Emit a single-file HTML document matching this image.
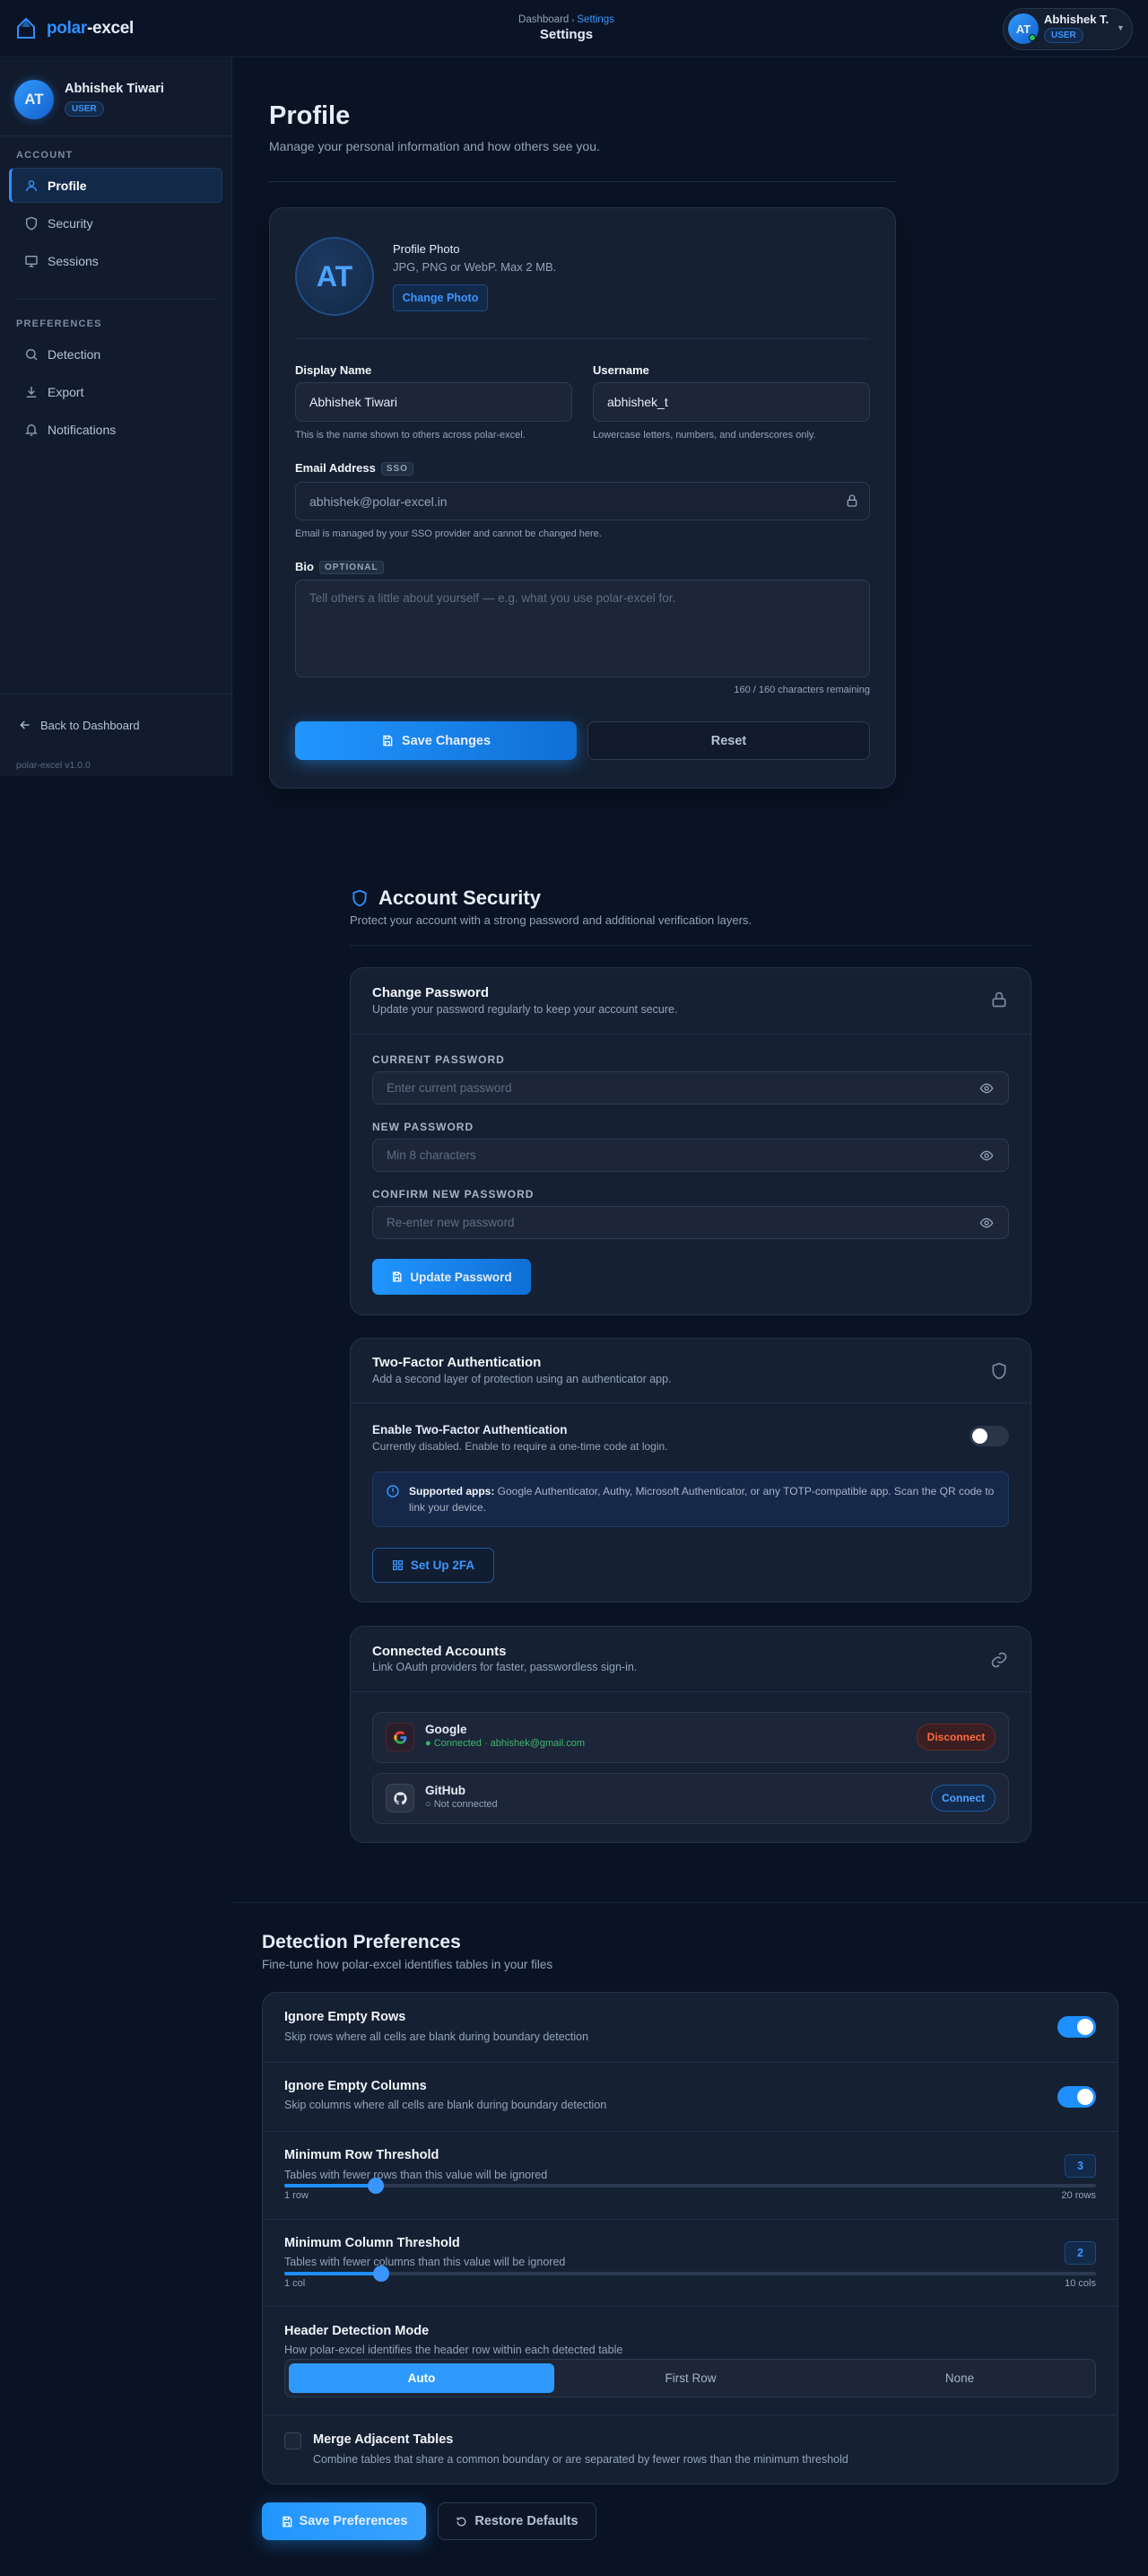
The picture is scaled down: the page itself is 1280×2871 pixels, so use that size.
<!DOCTYPE html>
<html><head><meta charset="utf-8"><style>
*{box-sizing:border-box;margin:0;padding:0}
body{width:1280px;height:2871px;background:#0a1324;font-family:"Liberation Sans",sans-serif;color:#e6edf7;position:relative;overflow:hidden}
.a{position:absolute}
.muted{color:#94a3b8}
.card{position:absolute;background:#152033;border:1px solid #24334a;border-radius:16px}
.inp{position:absolute;background:#1c2638;border:1px solid #2d3b52;border-radius:8px;font-size:14px;color:#e6edf7;padding-left:15px;display:flex;align-items:center}
.lbl{position:absolute;font-size:13px;font-weight:bold;color:#f1f5f9}
.hint{position:absolute;font-size:11px;color:#94a3b8}
.tag{display:inline-block;font-size:10px;letter-spacing:1px;color:#94a3b8;background:#222e42;border:1px solid #334158;border-radius:4px;padding:1px 5px;margin-left:6px;vertical-align:1px;font-weight:bold}
.nav{position:absolute;left:10px;width:238px;height:39px;display:flex;align-items:center;padding-left:17px;font-size:14px;color:#b6c2d3}
.nav svg{margin-right:10px}
.sec{position:absolute;left:18px;font-size:11px;letter-spacing:1.2px;color:#7d8aa0;font-weight:bold}
.h3{position:absolute;font-size:15px;font-weight:bold;color:#f1f5f9}
.sub{position:absolute;font-size:12.5px;color:#94a3b8}
.ulbl{position:absolute;font-size:12px;font-weight:bold;letter-spacing:1px;color:#a8b4c6}
.line{position:absolute;height:1px;background:#223048}
.tog{position:absolute;width:43px;height:24px;border-radius:12px;background:#1e8fff}
.tog::after{content:"";position:absolute;right:3px;top:3px;width:18px;height:18px;border-radius:50%;background:#fff}
</style></head><body>

<!-- header -->
<div class="a" style="left:0;top:0;width:1280px;height:64px;background:#0b1426;border-bottom:1px solid #17263d"></div>
<svg class="a" style="left:18px;top:20px" width="22" height="23" viewBox="0 0 22 23"><path d="M11 1 L20 10 L20 22 L2 22 L2 10 Z" fill="none" stroke="#2f8fff" stroke-width="2"/><path d="M11 2 L6 10 L16 10 Z" fill="#2f8fff" opacity=".6"/></svg>
<div class="a" style="left:52px;top:21px;font-size:19px;font-weight:bold;letter-spacing:-.3px"><span style="color:#2f8fff">polar</span>-excel</div>
<div class="a" style="left:0;width:1263px;top:16px;text-align:center;font-size:11.5px;color:#94a3b8">Dashboard <span style="font-size:8px">›</span> <span style="color:#3b95ff">Settings</span></div>
<div class="a" style="left:0;width:1263px;top:30px;text-align:center;font-size:15px;font-weight:bold">Settings</div>
<div class="a" style="left:1118px;top:9px;width:145px;height:47px;border-radius:24px;background:#141f31;border:1px solid #28374d"></div>
<div class="a" style="left:1124px;top:15px;width:34px;height:34px;border-radius:50%;background:linear-gradient(135deg,#2f9bff,#1560c9);font-size:13px;font-weight:bold;display:flex;align-items:center;justify-content:center">AT</div>
<div class="a" style="left:1147px;top:38px;width:8px;height:8px;border-radius:50%;background:#22c55e;border:1px solid #0b1426"></div>
<div class="a" style="left:1164px;top:14px;font-size:13px;font-weight:bold">Abhishek T.</div>
<div class="a" style="left:1164px;top:31px;font-size:10px;font-weight:bold;color:#3b95ff;background:#132a4a;border:1px solid #1f4b80;border-radius:10px;padding:2px 7px">USER</div>
<div class="a" style="left:1245px;top:26px;font-size:9px;color:#94a3b8">▼</div>

<!-- sidebar -->
<div class="a" style="left:0;top:65px;width:259px;height:800px;background:#111b2d;border-right:1px solid #17263d"></div>
<div class="a" style="left:16px;top:89px;width:44px;height:44px;border-radius:50%;background:linear-gradient(135deg,#2f9bff,#1560c9);font-size:17px;font-weight:bold;display:flex;align-items:center;justify-content:center;box-shadow:0 0 10px rgba(47,143,255,.4)">AT</div>
<div class="a" style="left:72px;top:91px;font-size:14.5px;font-weight:bold">Abhishek Tiwari</div>
<div class="a" style="left:72px;top:113px;font-size:10px;font-weight:bold;color:#3b95ff;background:#132a4a;border:1px solid #1f4b80;border-radius:9px;padding:2px 7px">USER</div>
<div class="line" style="left:0;top:151px;width:259px;background:#1b2a40"></div>
<div class="sec" style="top:167px">ACCOUNT</div>
<div class="nav" style="top:187px;background:#13294a;border:1px solid #1c3a63;border-left:3px solid #2f8fff;border-radius:6px;color:#fff;font-weight:bold;padding-left:14px"><svg width="16" height="16" viewBox="0 0 24 24" fill="none" stroke="#3b95ff" stroke-width="2"><circle cx="12" cy="8" r="4"/><path d="M4 21c0-4 4-7 8-7s8 3 8 7"/></svg>Profile</div>
<div class="nav" style="top:229px"><svg width="16" height="16" viewBox="0 0 24 24" fill="none" stroke="#94a3b8" stroke-width="2"><path d="M12 2l8 3v7c0 5-4 9-8 10-4-1-8-5-8-10V5z"/></svg>Security</div>
<div class="nav" style="top:271px"><svg width="16" height="16" viewBox="0 0 24 24" fill="none" stroke="#94a3b8" stroke-width="2"><rect x="3" y="4" width="18" height="13" rx="1"/><path d="M12 17v4M8 21h8"/></svg>Sessions</div>
<div class="line" style="left:18px;top:333px;width:223px;background:#1b2a40"></div>
<div class="sec" style="top:355px">PREFERENCES</div>
<div class="nav" style="top:375px"><svg width="16" height="16" viewBox="0 0 24 24" fill="none" stroke="#94a3b8" stroke-width="2"><circle cx="11" cy="11" r="7"/><path d="M21 21l-5-5"/></svg>Detection</div>
<div class="nav" style="top:417px"><svg width="16" height="16" viewBox="0 0 24 24" fill="none" stroke="#94a3b8" stroke-width="2"><path d="M12 3v12M7 10l5 5 5-5M4 20h16"/></svg>Export</div>
<div class="nav" style="top:459px"><svg width="16" height="16" viewBox="0 0 24 24" fill="none" stroke="#94a3b8" stroke-width="2"><path d="M6 16V10a6 6 0 0112 0v6l2 2H4z"/><path d="M10 21h4"/></svg>Notifications</div>
<div class="line" style="left:0;top:773px;width:259px;background:#1b2a40"></div>
<div class="a" style="left:20px;top:800px;font-size:13px;color:#b6c2d3;display:flex;align-items:center"><svg width="16" height="16" viewBox="0 0 24 24" fill="none" stroke="#b6c2d3" stroke-width="2" style="margin-right:9px"><path d="M19 12H5M11 6l-6 6 6 6"/></svg>Back to Dashboard</div>
<div class="a" style="left:18px;top:847px;font-size:10.5px;color:#5b6a80">polar-excel v1.0.0</div>

<!-- Profile -->
<div class="a" style="left:300px;top:113px;font-size:29px;font-weight:bold">Profile</div>
<div class="a muted" style="left:300px;top:155px;font-size:14px">Manage your personal information and how others see you.</div>
<div class="line" style="left:300px;top:202px;width:699px;background:#1a2d48"></div>
<div class="card" style="left:300px;top:231px;width:699px;height:648px;box-shadow:0 10px 30px rgba(0,0,0,.3)"></div>
<div class="a" style="left:329px;top:264px;width:88px;height:88px;border-radius:50%;background:radial-gradient(circle at 40% 35%,#1d3a63,#132844);border:2px solid #1f4e87;font-size:32px;font-weight:bold;color:#4da3ff;display:flex;align-items:center;justify-content:center">AT</div>
<div class="a" style="left:438px;top:270px;font-size:13px">Profile Photo</div>
<div class="a muted" style="left:438px;top:290px;font-size:13px">JPG, PNG or WebP. Max 2 MB.</div>
<div class="a" style="left:438px;top:317px;width:106px;height:30px;border-radius:5px;background:#13294a;border:1px solid #1f4b80;color:#3b95ff;font-size:12.5px;font-weight:bold;display:flex;align-items:center;justify-content:center">Change Photo</div>
<div class="line" style="left:329px;top:377px;width:641px"></div>
<div class="lbl" style="left:329px;top:405px">Display Name</div>
<div class="inp" style="left:329px;top:426px;width:309px;height:44px">Abhishek Tiwari</div>
<div class="hint" style="left:329px;top:479px">This is the name shown to others across polar-excel.</div>
<div class="lbl" style="left:661px;top:405px">Username</div>
<div class="inp" style="left:661px;top:426px;width:309px;height:44px">abhishek_t</div>
<div class="hint" style="left:661px;top:479px">Lowercase letters, numbers, and underscores only.</div>
<div class="lbl" style="left:329px;top:514px">Email Address<span class="tag">SSO</span></div>
<div class="inp" style="left:329px;top:537px;width:641px;height:43px;background:#182234;color:#94a3b8">abhishek@polar-excel.in</div>
<svg class="a" style="left:942px;top:549px" width="16" height="18" viewBox="0 0 24 24" fill="none" stroke="#94a3b8" stroke-width="2"><rect x="5" y="11" width="14" height="10" rx="2"/><path d="M8 11V7a4 4 0 018 0v4"/></svg>
<div class="hint" style="left:329px;top:589px">Email is managed by your SSO provider and cannot be changed here.</div>
<div class="lbl" style="left:329px;top:624px">Bio<span class="tag">OPTIONAL</span></div>
<div class="inp" style="left:329px;top:646px;width:641px;height:109px;align-items:flex-start;padding-top:12px;color:#5f6d82;font-size:13.5px">Tell others a little about yourself — e.g. what you use polar-excel for.</div>
<div class="hint" style="left:329px;width:641px;text-align:right;top:763px">160 / 160 characters remaining</div>
<div class="a" style="left:329px;top:804px;width:314px;height:43px;border-radius:8px;background:linear-gradient(90deg,#2196ff,#0f6fd6);box-shadow:0 4px 18px rgba(33,150,255,.45);font-size:14.5px;font-weight:bold;display:flex;align-items:center;justify-content:center"><svg width="14" height="15" viewBox="0 0 24 24" fill="none" stroke="#fff" stroke-width="2.2" style="margin-right:9px"><path d="M5 3h11l4 4v14H5z"/><path d="M8 3v5h7V3M8 21v-7h8v7"/></svg>Save Changes</div>
<div class="a" style="left:655px;top:804px;width:315px;height:43px;border-radius:8px;border:1px solid #2d3b52;background:#111a2b;font-size:14.5px;font-weight:bold;color:#b6c2d3;display:flex;align-items:center;justify-content:center">Reset</div>

<!-- Account Security -->
<svg class="a" style="left:391px;top:990px" width="20" height="22" viewBox="0 0 24 24" fill="none" stroke="#2f8fff" stroke-width="2.2"><path d="M12 2l8 3v7c0 5-4 9-8 10-4-1-8-5-8-10V5z"/></svg>
<div class="a" style="left:422px;top:988px;font-size:22px;font-weight:bold">Account Security</div>
<div class="a muted" style="left:390px;top:1018px;font-size:13px">Protect your account with a strong password and additional verification layers.</div>
<div class="line" style="left:390px;top:1053px;width:760px;background:#1a2840"></div>

<div class="card" style="left:390px;top:1078px;width:760px;height:388px"></div>
<div class="h3" style="left:415px;top:1098px">Change Password</div>
<div class="sub" style="left:415px;top:1118px">Update your password regularly to keep your account secure.</div>
<svg class="a" style="left:1104px;top:1104px" width="20" height="20" viewBox="0 0 24 24" fill="none" stroke="#7d8aa0" stroke-width="2"><rect x="4" y="11" width="16" height="10" rx="2"/><path d="M8 11V7a4 4 0 018 0v4"/></svg>
<div class="line" style="left:391px;top:1152px;width:758px"></div>
<div class="ulbl" style="left:415px;top:1174px">CURRENT PASSWORD</div>
<div class="inp" style="left:415px;top:1194px;width:710px;height:37px;color:#5f6d82;font-size:13.5px">Enter current password</div>
<div class="ulbl" style="left:415px;top:1249px">NEW PASSWORD</div>
<div class="inp" style="left:415px;top:1269px;width:710px;height:37px;color:#5f6d82;font-size:13.5px">Min 8 characters</div>
<div class="ulbl" style="left:415px;top:1324px">CONFIRM NEW PASSWORD</div>
<div class="inp" style="left:415px;top:1344px;width:710px;height:37px;color:#5f6d82;font-size:13.5px">Re-enter new password</div>
<svg class="a" style="left:1092px;top:1205px" width="16" height="16" viewBox="0 0 24 24" fill="none" stroke="#94a3b8" stroke-width="2"><path d="M2 12s4-7 10-7 10 7 10 7-4 7-10 7S2 12 2 12z"/><circle cx="12" cy="12" r="3"/></svg>
<svg class="a" style="left:1092px;top:1280px" width="16" height="16" viewBox="0 0 24 24" fill="none" stroke="#94a3b8" stroke-width="2"><path d="M2 12s4-7 10-7 10 7 10 7-4 7-10 7S2 12 2 12z"/><circle cx="12" cy="12" r="3"/></svg>
<svg class="a" style="left:1092px;top:1355px" width="16" height="16" viewBox="0 0 24 24" fill="none" stroke="#94a3b8" stroke-width="2"><path d="M2 12s4-7 10-7 10 7 10 7-4 7-10 7S2 12 2 12z"/><circle cx="12" cy="12" r="3"/></svg>
<div class="a" style="left:415px;top:1403px;width:177px;height:40px;border-radius:7px;background:linear-gradient(90deg,#2196ff,#0f6fd6);font-size:13.5px;font-weight:bold;display:flex;align-items:center;justify-content:center"><svg width="13" height="14" viewBox="0 0 24 24" fill="none" stroke="#fff" stroke-width="2.4" style="margin-right:8px"><path d="M5 3h11l4 4v14H5z"/><path d="M8 3v5h7V3M8 21v-7h8v7"/></svg>Update Password</div>

<div class="card" style="left:390px;top:1491px;width:760px;height:295px"></div>
<div class="h3" style="left:415px;top:1510px">Two-Factor Authentication</div>
<div class="sub" style="left:415px;top:1530px">Add a second layer of protection using an authenticator app.</div>
<svg class="a" style="left:1104px;top:1518px" width="20" height="20" viewBox="0 0 24 24" fill="none" stroke="#7d8aa0" stroke-width="2"><path d="M12 2l8 3v7c0 5-4 9-8 10-4-1-8-5-8-10V5z"/></svg>
<div class="line" style="left:391px;top:1563px;width:758px"></div>
<div class="a" style="left:415px;top:1586px;font-size:13.5px;font-weight:bold">Enable Two-Factor Authentication</div>
<div class="sub" style="left:415px;top:1605px;font-size:12px">Currently disabled. Enable to require a one-time code at login.</div>
<div class="a" style="left:1081px;top:1589px;width:44px;height:23px;border-radius:12px;background:#2a3547"><div class="a" style="left:3px;top:3px;width:17px;height:17px;border-radius:50%;background:#fff"></div></div>
<div class="a" style="left:415px;top:1640px;width:710px;height:62px;border-radius:8px;background:#15284a;border:1px solid #1f3b63"></div>
<svg class="a" style="left:430px;top:1654px" width="16" height="16" viewBox="0 0 24 24" fill="none" stroke="#3b95ff" stroke-width="2.2"><circle cx="12" cy="12" r="9"/><path d="M12 7v6M12 16v.5"/></svg>
<div class="a" style="left:456px;top:1653px;width:660px;font-size:12px;line-height:18px;color:#a8b4c6"><b style="color:#f1f5f9">Supported apps:</b> Google Authenticator, Authy, Microsoft Authenticator, or any TOTP-compatible app. Scan the QR code to link your device.</div>
<div class="a" style="left:415px;top:1725px;width:136px;height:39px;border-radius:7px;border:1px solid #1f5aa0;background:#111d30;color:#3b95ff;font-size:13.5px;font-weight:bold;display:flex;align-items:center;justify-content:center"><svg width="13" height="13" viewBox="0 0 24 24" fill="none" stroke="#3b95ff" stroke-width="2.4" style="margin-right:8px"><rect x="3" y="3" width="7" height="7"/><rect x="14" y="3" width="7" height="7"/><rect x="3" y="14" width="7" height="7"/><rect x="14" y="14" width="7" height="7"/></svg>Set Up 2FA</div>

<div class="card" style="left:390px;top:1812px;width:760px;height:242px"></div>
<div class="h3" style="left:415px;top:1832px">Connected Accounts</div>
<div class="sub" style="left:415px;top:1851px">Link OAuth providers for faster, passwordless sign-in.</div>
<svg class="a" style="left:1104px;top:1840px" width="20" height="20" viewBox="0 0 24 24" fill="none" stroke="#7d8aa0" stroke-width="2"><path d="M10 14a5 5 0 007 0l3-3a5 5 0 00-7-7l-1 1"/><path d="M14 10a5 5 0 00-7 0l-3 3a5 5 0 007 7l1-1"/></svg>
<div class="line" style="left:391px;top:1885px;width:758px"></div>
<div class="a" style="left:415px;top:1908px;width:710px;height:57px;border-radius:10px;background:#1c2638;border:1px solid #2a374c"></div>
<div class="a" style="left:430px;top:1920px;width:32px;height:32px;border-radius:7px;background:#2a1f2d;border:1px solid #4a2630;display:flex;align-items:center;justify-content:center"><svg width="17" height="17" viewBox="0 0 24 24"><path d="M21.6 12.2c0-.7-.1-1.4-.2-2H12v3.8h5.4a4.6 4.6 0 01-2 3v2.5h3.2c1.9-1.7 3-4.3 3-7.3z" fill="#4285f4"/><path d="M12 22c2.7 0 5-.9 6.6-2.4l-3.2-2.5c-.9.6-2 1-3.4 1-2.6 0-4.8-1.8-5.6-4.1H3.1v2.6A10 10 0 0012 22z" fill="#34a853"/><path d="M6.4 14c-.2-.6-.3-1.3-.3-2s.1-1.4.3-2V7.4H3.1a10 10 0 000 9.2z" fill="#fbbc05"/><path d="M12 6c1.5 0 2.8.5 3.8 1.5l2.9-2.9A10 10 0 003.1 7.4L6.4 10C7.2 7.7 9.4 6 12 6z" fill="#ea4335"/></svg></div>
<div class="a" style="left:474px;top:1920px;font-size:13.5px;font-weight:bold">Google</div>
<div class="a" style="left:474px;top:1937px;font-size:11px;color:#3fb86e">● Connected · abhishek@gmail.com</div>
<div class="a" style="left:1022px;top:1921px;width:88px;height:30px;border-radius:15px;background:#3a1e22;border:1px solid #6b2a22;color:#ff6a3d;font-size:12px;font-weight:bold;display:flex;align-items:center;justify-content:center">Disconnect</div>
<div class="a" style="left:415px;top:1976px;width:710px;height:57px;border-radius:10px;background:#1c2638;border:1px solid #2a374c"></div>
<div class="a" style="left:430px;top:1988px;width:32px;height:32px;border-radius:7px;background:#2a3445;border:1px solid #3a475a;display:flex;align-items:center;justify-content:center"><svg width="17" height="17" viewBox="0 0 24 24" fill="#e6edf7"><path d="M12 2a10 10 0 00-3.2 19.5c.5.1.7-.2.7-.5v-1.7c-2.8.6-3.4-1.3-3.4-1.3-.5-1.2-1.1-1.5-1.1-1.5-.9-.6.1-.6.1-.6 1 .1 1.5 1 1.5 1 .9 1.5 2.3 1.1 2.9.8.1-.6.4-1.1.6-1.3-2.2-.3-4.6-1.1-4.6-5a3.9 3.9 0 011-2.7c-.1-.3-.4-1.3.1-2.7 0 0 .8-.3 2.8 1a9.6 9.6 0 015 0c1.9-1.3 2.8-1 2.8-1 .5 1.4.2 2.4.1 2.7a3.9 3.9 0 011 2.7c0 3.9-2.4 4.7-4.6 5 .4.3.7.9.7 1.9V21c0 .3.2.6.7.5A10 10 0 0012 2z"/></svg></div>
<div class="a" style="left:474px;top:1988px;font-size:13.5px;font-weight:bold">GitHub</div>
<div class="a" style="left:474px;top:2005px;font-size:11px;color:#94a3b8">○ Not connected</div>
<div class="a" style="left:1038px;top:1989px;width:72px;height:30px;border-radius:15px;background:#13294a;border:1px solid #1f5aa0;color:#4da3ff;font-size:12px;font-weight:bold;display:flex;align-items:center;justify-content:center">Connect</div>

<!-- Detection -->
<div class="line" style="left:260px;top:2120px;width:1020px;background:#16263e"></div>
<div class="a" style="left:292px;top:2153px;font-size:21px;font-weight:bold">Detection Preferences</div>
<div class="a muted" style="left:292px;top:2182px;font-size:13.5px">Fine-tune how polar-excel identifies tables in your files</div>
<div class="card" style="left:292px;top:2220px;width:955px;height:549px"></div>
<div class="h3" style="left:317px;top:2240px;font-size:14.5px">Ignore Empty Rows</div>
<div class="sub" style="left:317px;top:2263px">Skip rows where all cells are blank during boundary detection</div>
<div class="tog" style="left:1179px;top:2247px"></div>
<div class="line" style="left:293px;top:2298px;width:953px"></div>
<div class="h3" style="left:317px;top:2317px;font-size:14.5px">Ignore Empty Columns</div>
<div class="sub" style="left:317px;top:2339px">Skip columns where all cells are blank during boundary detection</div>
<div class="tog" style="left:1179px;top:2325px"></div>
<div class="line" style="left:293px;top:2375px;width:953px"></div>
<div class="h3" style="left:317px;top:2394px;font-size:14.5px">Minimum Row Threshold</div>
<div class="sub" style="left:317px;top:2417px">Tables with fewer rows than this value will be ignored</div>
<div class="a" style="left:1187px;top:2401px;width:35px;height:26px;border-radius:5px;background:#13294a;border:1px solid #1f4b80;color:#3b95ff;font-size:12.5px;font-weight:bold;display:flex;align-items:center;justify-content:center">3</div>
<div class="a" style="left:317px;top:2434px;width:905px;height:4px;border-radius:2px;background:#2d3b52"><div style="width:102px;height:4px;border-radius:2px;background:#1e8fff"></div></div>
<div class="a" style="left:410px;top:2427px;width:18px;height:18px;border-radius:50%;background:#3b95ff"></div>
<div class="hint" style="left:317px;top:2441px">1 row</div>
<div class="hint" style="left:1122px;width:100px;text-align:right;top:2441px">20 rows</div>
<div class="line" style="left:293px;top:2473px;width:953px"></div>
<div class="h3" style="left:317px;top:2492px;font-size:14.5px">Minimum Column Threshold</div>
<div class="sub" style="left:317px;top:2514px">Tables with fewer columns than this value will be ignored</div>
<div class="a" style="left:1187px;top:2498px;width:35px;height:26px;border-radius:5px;background:#13294a;border:1px solid #1f4b80;color:#3b95ff;font-size:12.5px;font-weight:bold;display:flex;align-items:center;justify-content:center">2</div>
<div class="a" style="left:317px;top:2532px;width:905px;height:4px;border-radius:2px;background:#2d3b52"><div style="width:108px;height:4px;border-radius:2px;background:#1e8fff"></div></div>
<div class="a" style="left:416px;top:2525px;width:18px;height:18px;border-radius:50%;background:#3b95ff"></div>
<div class="hint" style="left:317px;top:2539px">1 col</div>
<div class="hint" style="left:1122px;width:100px;text-align:right;top:2539px">10 cols</div>
<div class="line" style="left:293px;top:2570px;width:953px"></div>
<div class="h3" style="left:317px;top:2590px;font-size:14.5px">Header Detection Mode</div>
<div class="sub" style="left:317px;top:2612px">How polar-excel identifies the header row within each detected table</div>
<div class="a" style="left:317px;top:2629px;width:905px;height:43px;border-radius:8px;background:#1c2638;border:1px solid #2d3b52"></div>
<div class="a" style="left:322px;top:2634px;width:296px;height:33px;border-radius:6px;background:#2e9aff;color:#fff;font-size:13.5px;font-weight:bold;display:flex;align-items:center;justify-content:center">Auto</div>
<div class="a" style="left:620px;top:2634px;width:300px;height:33px;color:#a8b4c6;font-size:13.5px;display:flex;align-items:center;justify-content:center">First Row</div>
<div class="a" style="left:920px;top:2634px;width:300px;height:33px;color:#a8b4c6;font-size:13.5px;display:flex;align-items:center;justify-content:center">None</div>
<div class="line" style="left:293px;top:2691px;width:953px"></div>
<div class="a" style="left:317px;top:2711px;width:19px;height:19px;border-radius:4px;background:#1c2638;border:1px solid #3a475a"></div>
<div class="h3" style="left:349px;top:2711px;font-size:14.5px">Merge Adjacent Tables</div>
<div class="sub" style="left:349px;top:2734px">Combine tables that share a common boundary or are separated by fewer rows than the minimum threshold</div>
<div class="a" style="left:292px;top:2789px;width:183px;height:42px;border-radius:8px;background:linear-gradient(90deg,#2196ff,#3aa2ff);box-shadow:0 4px 18px rgba(33,150,255,.4);font-size:14.5px;font-weight:bold;display:flex;align-items:center;justify-content:center"><svg width="14" height="15" viewBox="0 0 24 24" fill="none" stroke="#fff" stroke-width="2.2" style="margin-right:7px"><path d="M5 3h11l4 4v14H5z"/><path d="M8 3v5h7V3M8 21v-7h8v7"/></svg>Save Preferences</div>
<div class="a" style="left:488px;top:2789px;width:177px;height:42px;border-radius:8px;border:1px solid #2d3b52;background:#0d1627;color:#b6c2d3;font-size:14.5px;font-weight:bold;display:flex;align-items:center;justify-content:center"><svg width="13" height="13" viewBox="0 0 24 24" fill="none" stroke="#b6c2d3" stroke-width="2.4" style="margin-right:8px"><path d="M4 12a8 8 0 108-8c-2.5 0-4.6 1.1-6 3M4 3v4h4"/></svg>Restore Defaults</div>
</body></html>
